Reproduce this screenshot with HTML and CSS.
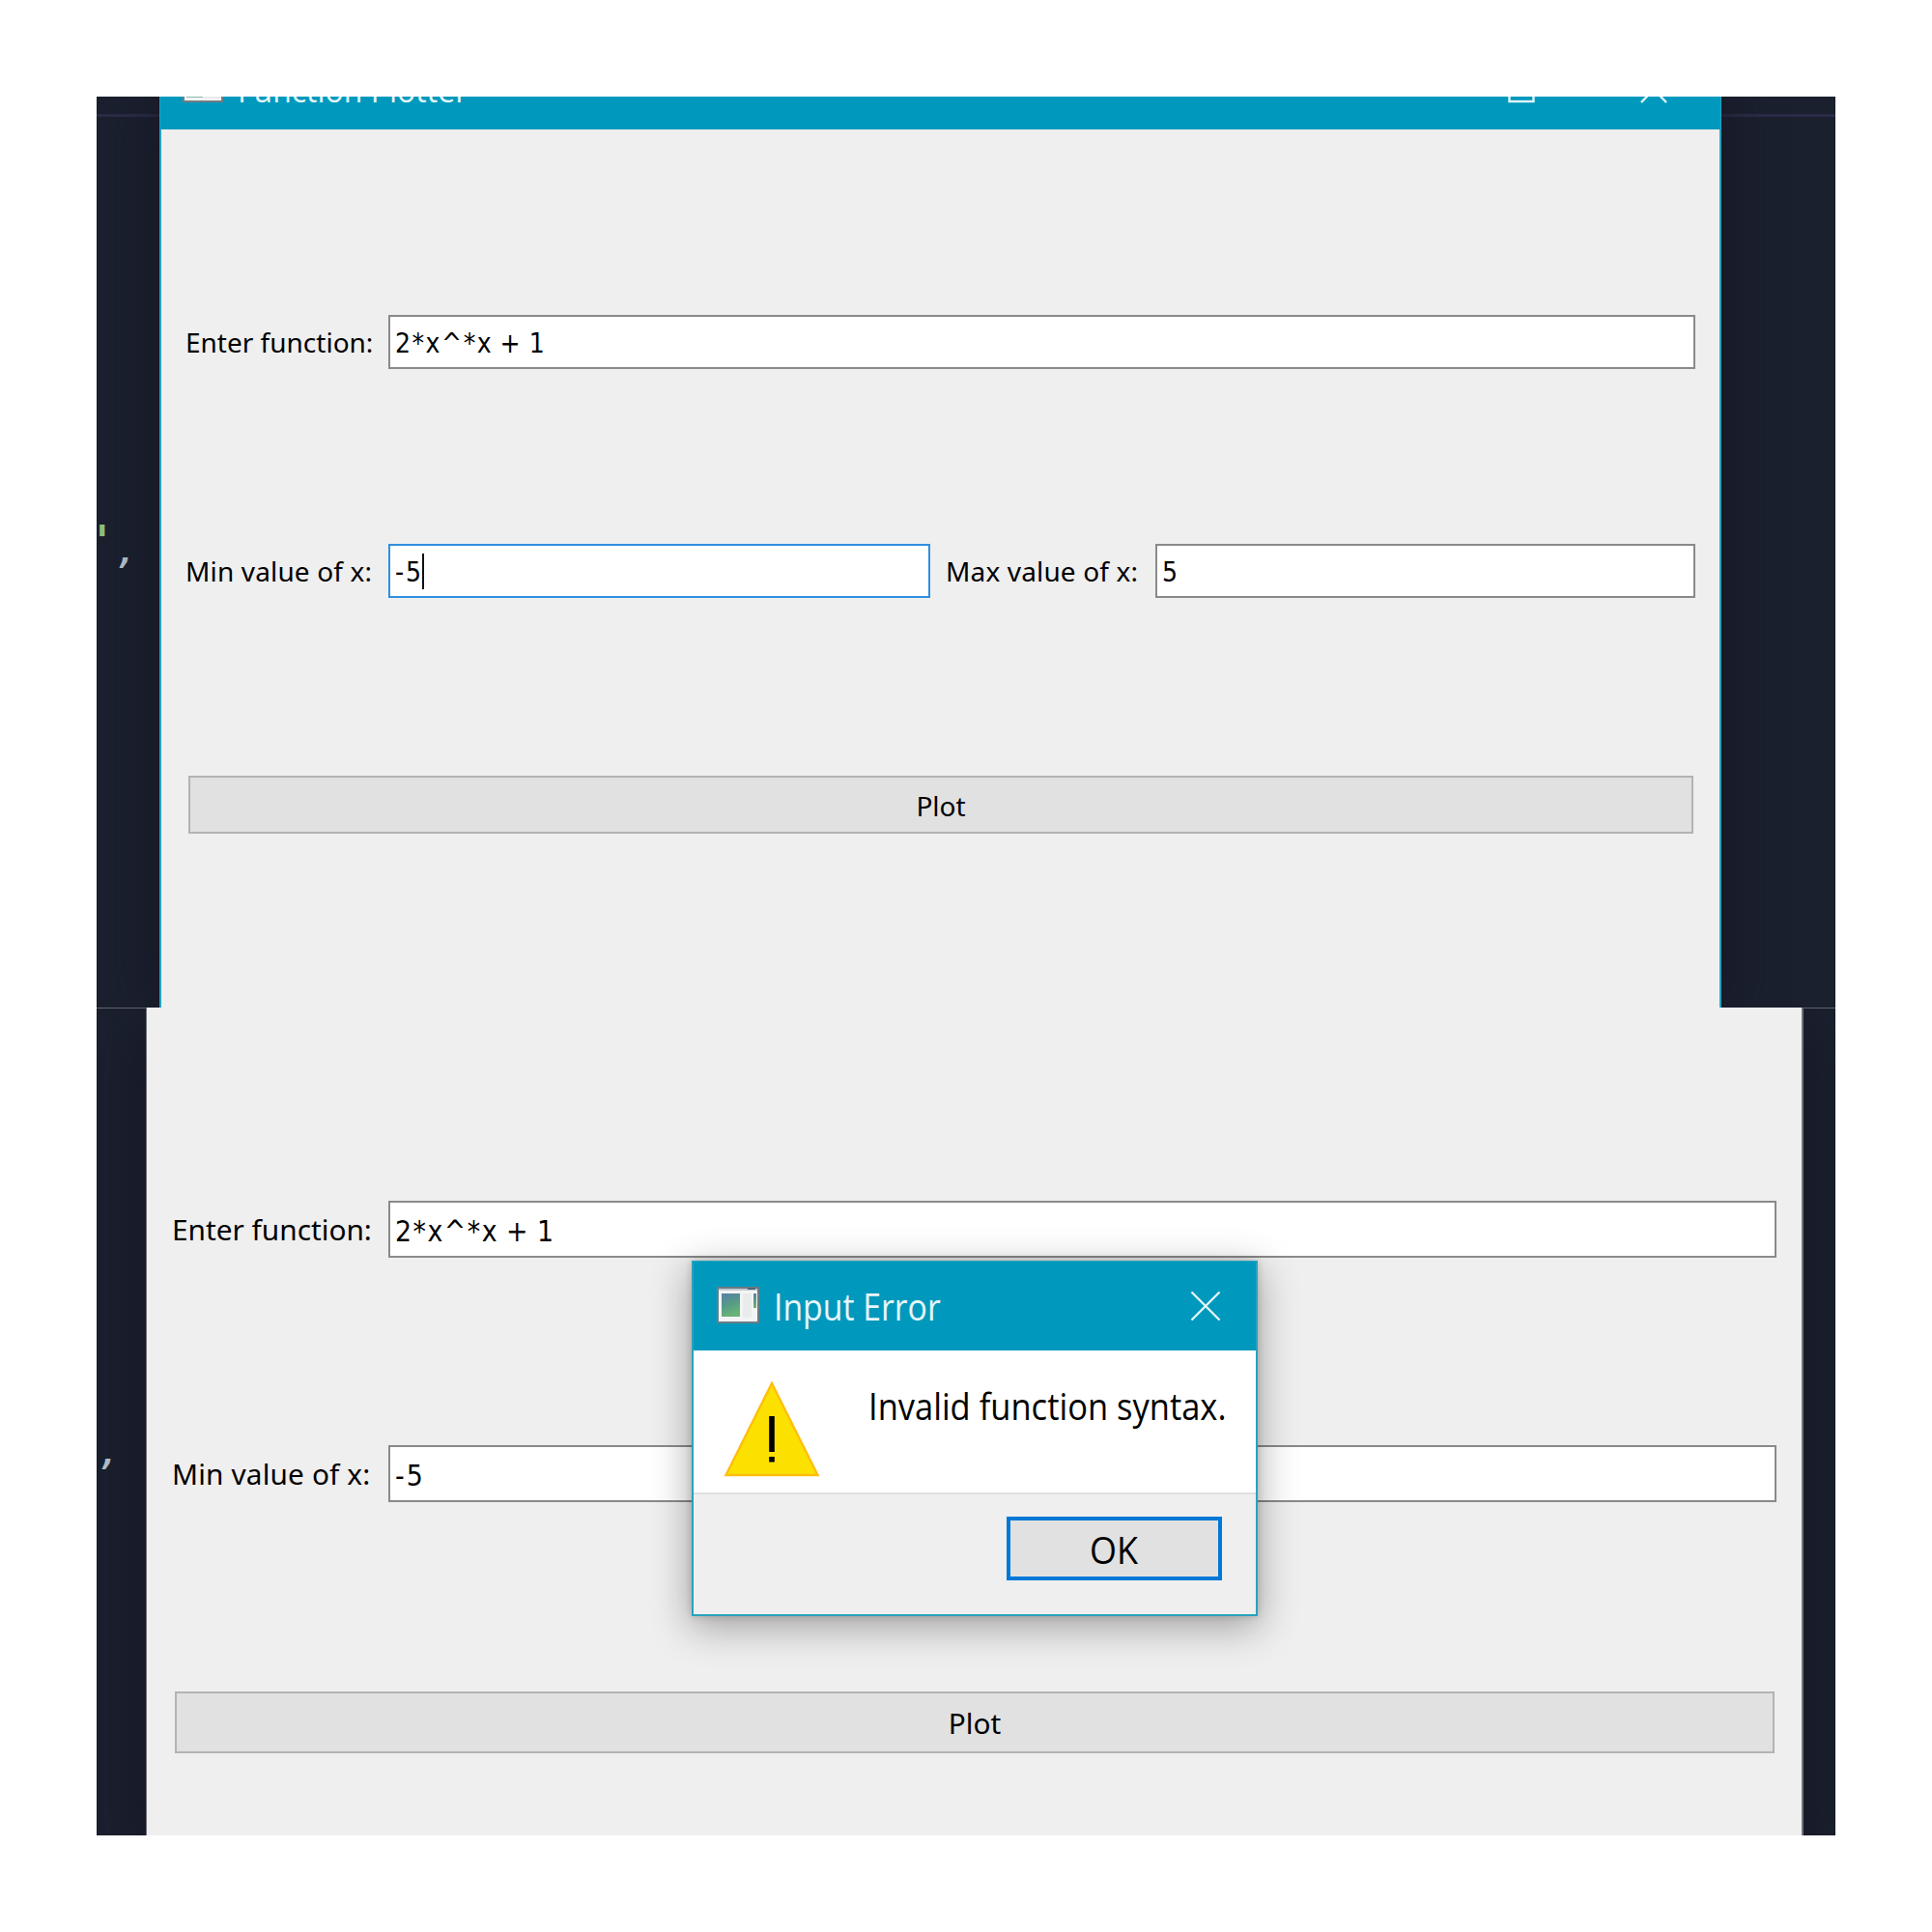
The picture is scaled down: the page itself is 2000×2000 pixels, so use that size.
FILE: index.html
```
<!DOCTYPE html>
<html lang="en">
<head>
<meta charset="utf-8">
<title>Function Plotter</title>
<link rel="stylesheet" href="styles.css">
</head>
<body>
<main class="captures">
  <section class="desktop desktop-top">
    <div class="editor"><span class="quote">'</span><span class="comma">,</span></div>
    <div class="window window-active">
      <header class="titlebar">
        <svg class="app-icon" width="42" height="38" viewBox="0 0 42 38"><rect x="1" y="1" width="40" height="36" fill="#f3f5f5" stroke="#747c80" stroke-width="2"/><rect x="4" y="9" width="17" height="24" fill="#8fb8a8"/><rect x="22" y="8" width="17" height="26" fill="#e8ebeb"/></svg>
        <span class="title">Function Plotter</span>
        <svg class="controls" width="166" height="28" viewBox="0 0 166 28"><rect x="1.5" y="1.5" width="25" height="24.5" fill="none" stroke="#e2f5f9" stroke-width="2.4"/><path d="M138 0L164 27M164 0L138 27" fill="none" stroke="#e2f5f9" stroke-width="2.4"/></svg>
      </header>
      <div class="form">
        <div class="row row-function">
          <label class="label">Enter function:</label>
          <div class="field">2*x^*x + 1</div>
        </div>
        <div class="row row-range">
          <label class="label label-min">Min value of x:</label>
          <div class="field focused"><span class="short">-5</span><i class="caret"></i></div>
          <label class="label label-max">Max value of x:</label>
          <div class="field">5</div>
        </div>
        <div class="button">Plot</div>
      </div>
    </div>
  </section>

  <section class="desktop desktop-bottom">
    <div class="editor"><span class="comma">,</span></div>
    <div class="window window-inactive">
      <div class="form">
        <div class="row row-function">
          <label class="label">Enter function:</label>
          <div class="field">2*x^*x + 1</div>
        </div>
        <div class="row">
          <label class="label label-min">Min value of x:</label>
          <div class="field"><span class="short">-5</span></div>
        </div>
        <div class="button">Plot</div>
      </div>
    </div>
    <div class="dialog">
      <header class="dialog-title">
        <svg class="dialog-icon" width="44" height="38" viewBox="0 0 44 38">
          <defs><linearGradient id="pane" x1="0" y1="0" x2=".3" y2="1"><stop offset="0" stop-color="#5a7fae"/><stop offset=".5" stop-color="#559888"/><stop offset="1" stop-color="#67b475"/></linearGradient></defs>
          <rect x="1" y="1" width="42" height="36" fill="#f3f4f5" stroke="#6d7c86" stroke-width="2"/>
          <path d="M2 3h40" stroke="#c5cbd1" stroke-width="2"/>
          <path d="M32 2h8" stroke="#4e6680" stroke-width="2"/>
          <rect x="5" y="7" width="19" height="24" fill="url(#pane)"/>
          <rect x="27" y="7" width="9" height="25" fill="#e9ebec"/>
          <rect x="38" y="7" width="3" height="15" fill="url(#pane)"/>
        </svg>
        <span class="dialog-name">Input Error</span>
        <svg class="close" width="32" height="32" viewBox="0 0 32 32"><path d="M1.5 1.5L30.5 30.5M30.5 1.5L1.5 30.5" fill="none" stroke="#e6f6fa" stroke-width="2.3"/></svg>
      </header>
      <div class="message">
        <svg class="warning" width="100" height="100" viewBox="0 0 100 100"><path d="M50 3L97.5 98H2.5Z" fill="#fce100" stroke="#ffbe0d" stroke-width="2.4"/><path d="M47.2 37h5.6v37h-5.6zM47.2 79h5.6v5.5h-5.6z" fill="#000"/></svg>
        <span class="message-text">Invalid function syntax.</span>
      </div>
      <footer class="actions"><div class="ok"><span class="ok-text">OK</span></div></footer>
    </div>
  </section>
</main>
</body>
</html>
```
FILE: styles.css
```
* { box-sizing: border-box; }
body { margin: 0; background: #fff; }
.captures { width: 2000px; height: 2000px; padding: 100px; }
.desktop { position: relative; display: flex; overflow: hidden; background: #1a202e; color: #000; font-family: "Noto Sans", sans-serif; white-space: nowrap; }
.desktop-top { height: 943px; font-size: 28px; background: linear-gradient(#1a202e 18px, #2a2c48 18px, #2a2c48 21px, #1a202e 21px); }
.desktop-bottom { height: 857px; font-size: 29.8px; background: linear-gradient(#646773 1px, #1a202e 1px); }

.editor { display: flex; flex-direction: column; flex: none; font-family: "DejaVu Sans Mono", monospace; font-size: 34px; line-height: 40px; }
.desktop-top .editor { width: 65px; padding-top: 441px; }
.desktop-bottom .editor { width: 51px; padding-top: 441px; }
.quote { height: 10px; margin-left: -1px; color: #8fc078; font: bold 44px/40px "DejaVu Sans", sans-serif; }
.comma { color: #b9c4cf; font-weight: bold; font-style: italic; }
.desktop-top .comma { margin-left: 20px; }
.desktop-bottom .comma { margin-left: 2px; }

.window { flex: none; background: #efefef; }
.window-active { width: 1617px; border: solid #24a3c0; border-width: 0 2px; box-shadow: 0 0 50px #171523; }
.window-inactive { width: 1716px; border: solid #6f7178; border-width: 0 2px 0 1px; box-shadow: 0 24px 50px #171523; }
.titlebar { display: flex; height: 34px; margin: 0 -1px; padding: 0 54px 0 23px; background: #0099bd; align-items: flex-start; overflow: hidden; }
.app-icon { flex: none; margin-top: -32px; }
.title { margin: -28px 0 0 15px; font: 32px/44px "Open Sans", sans-serif; color: #e6f6fa; }
.controls { margin: -21px 0 0 auto; }

.form { display: flex; flex-direction: column; }
.window-active .form { padding: 192px 25px 0 24px; }
.window-inactive .form { padding: 200px 26px 0 25px; }
.row { display: grid; }
.window-active .row { height: 56px; grid-template-columns: 211px 1fr; }
.window-active .row-range { grid-template-columns: 211px 561px 233px 1fr; }
.window-inactive .row { height: 59px; grid-template-columns: 225px 1fr; }
.window-active .row-function { margin-bottom: 181px; }
.window-inactive .row-function { margin-bottom: 194px; }
.label, .field { display: flex; align-items: center; }
.label { padding-left: 1px; }
.label-min { letter-spacing: .15px; }
.label-max { padding-left: 16px; letter-spacing: .15px; }
.field { padding: 3px 0 0 5px; border: 2px solid #8a8a8a; background: #fff; font-family: "DejaVu Sans Condensed", "DejaVu Sans", sans-serif; letter-spacing: 1.5px; word-spacing: -2px; }
.short { letter-spacing: 2px; }
.focused { border-color: #308fe0; }
.caret { width: 2px; height: 37px; margin: -2px 0 0 -1px; background: #111; }
.button { display: flex; align-items: center; justify-content: center; padding-top: 1px; border: 2px solid #b3b3b3; background: #e1e1e1; }
.window-active .button { height: 60px; margin: 184px 2px 0 4px; }
.window-inactive .button { height: 64px; margin: 196px 2px 0 4px; }

.dialog { position: absolute; left: 616px; top: 262px; width: 586px; height: 368px; border: 2px solid #27a3bf; background: #efefef; box-shadow: 0 10px 38px 2px rgba(0, 0, 0, .32), 0 0 8px rgba(0, 0, 0, .18); font-family: "Open Sans", sans-serif; font-size: 37.5px; }
.dialog-title { display: flex; align-items: flex-start; height: 92px; margin-top: -1px; padding: 0 36px 0 24px; background: #0099bd; color: #e6f6fa; }
.dialog-icon { margin-top: 26px; }
.dialog-name { margin: 21px 0 0 15px; line-height: 52px; transform: scaleX(.9); transform-origin: left; }
.close { margin: 30px 0 0 auto; }
.message { display: flex; align-items: flex-start; height: 149px; padding: 31px 0 0 31px; border-bottom: 2px solid #dfdfdf; background: #fff; }
.message-text { margin: 1px 0 0 50px; line-height: 52px; transform: scaleX(.92); transform-origin: left; }
.warning { flex: none; }
.actions { display: flex; justify-content: flex-end; padding: 23px 35px 0 0; }
.ok { display: flex; align-items: center; justify-content: center; width: 223px; height: 66px; padding-top: 3px; border: 4.5px solid #0078d7; background: #e1e1e1; }
.ok-text { line-height: 52px; transform: scaleX(.96); }
```
